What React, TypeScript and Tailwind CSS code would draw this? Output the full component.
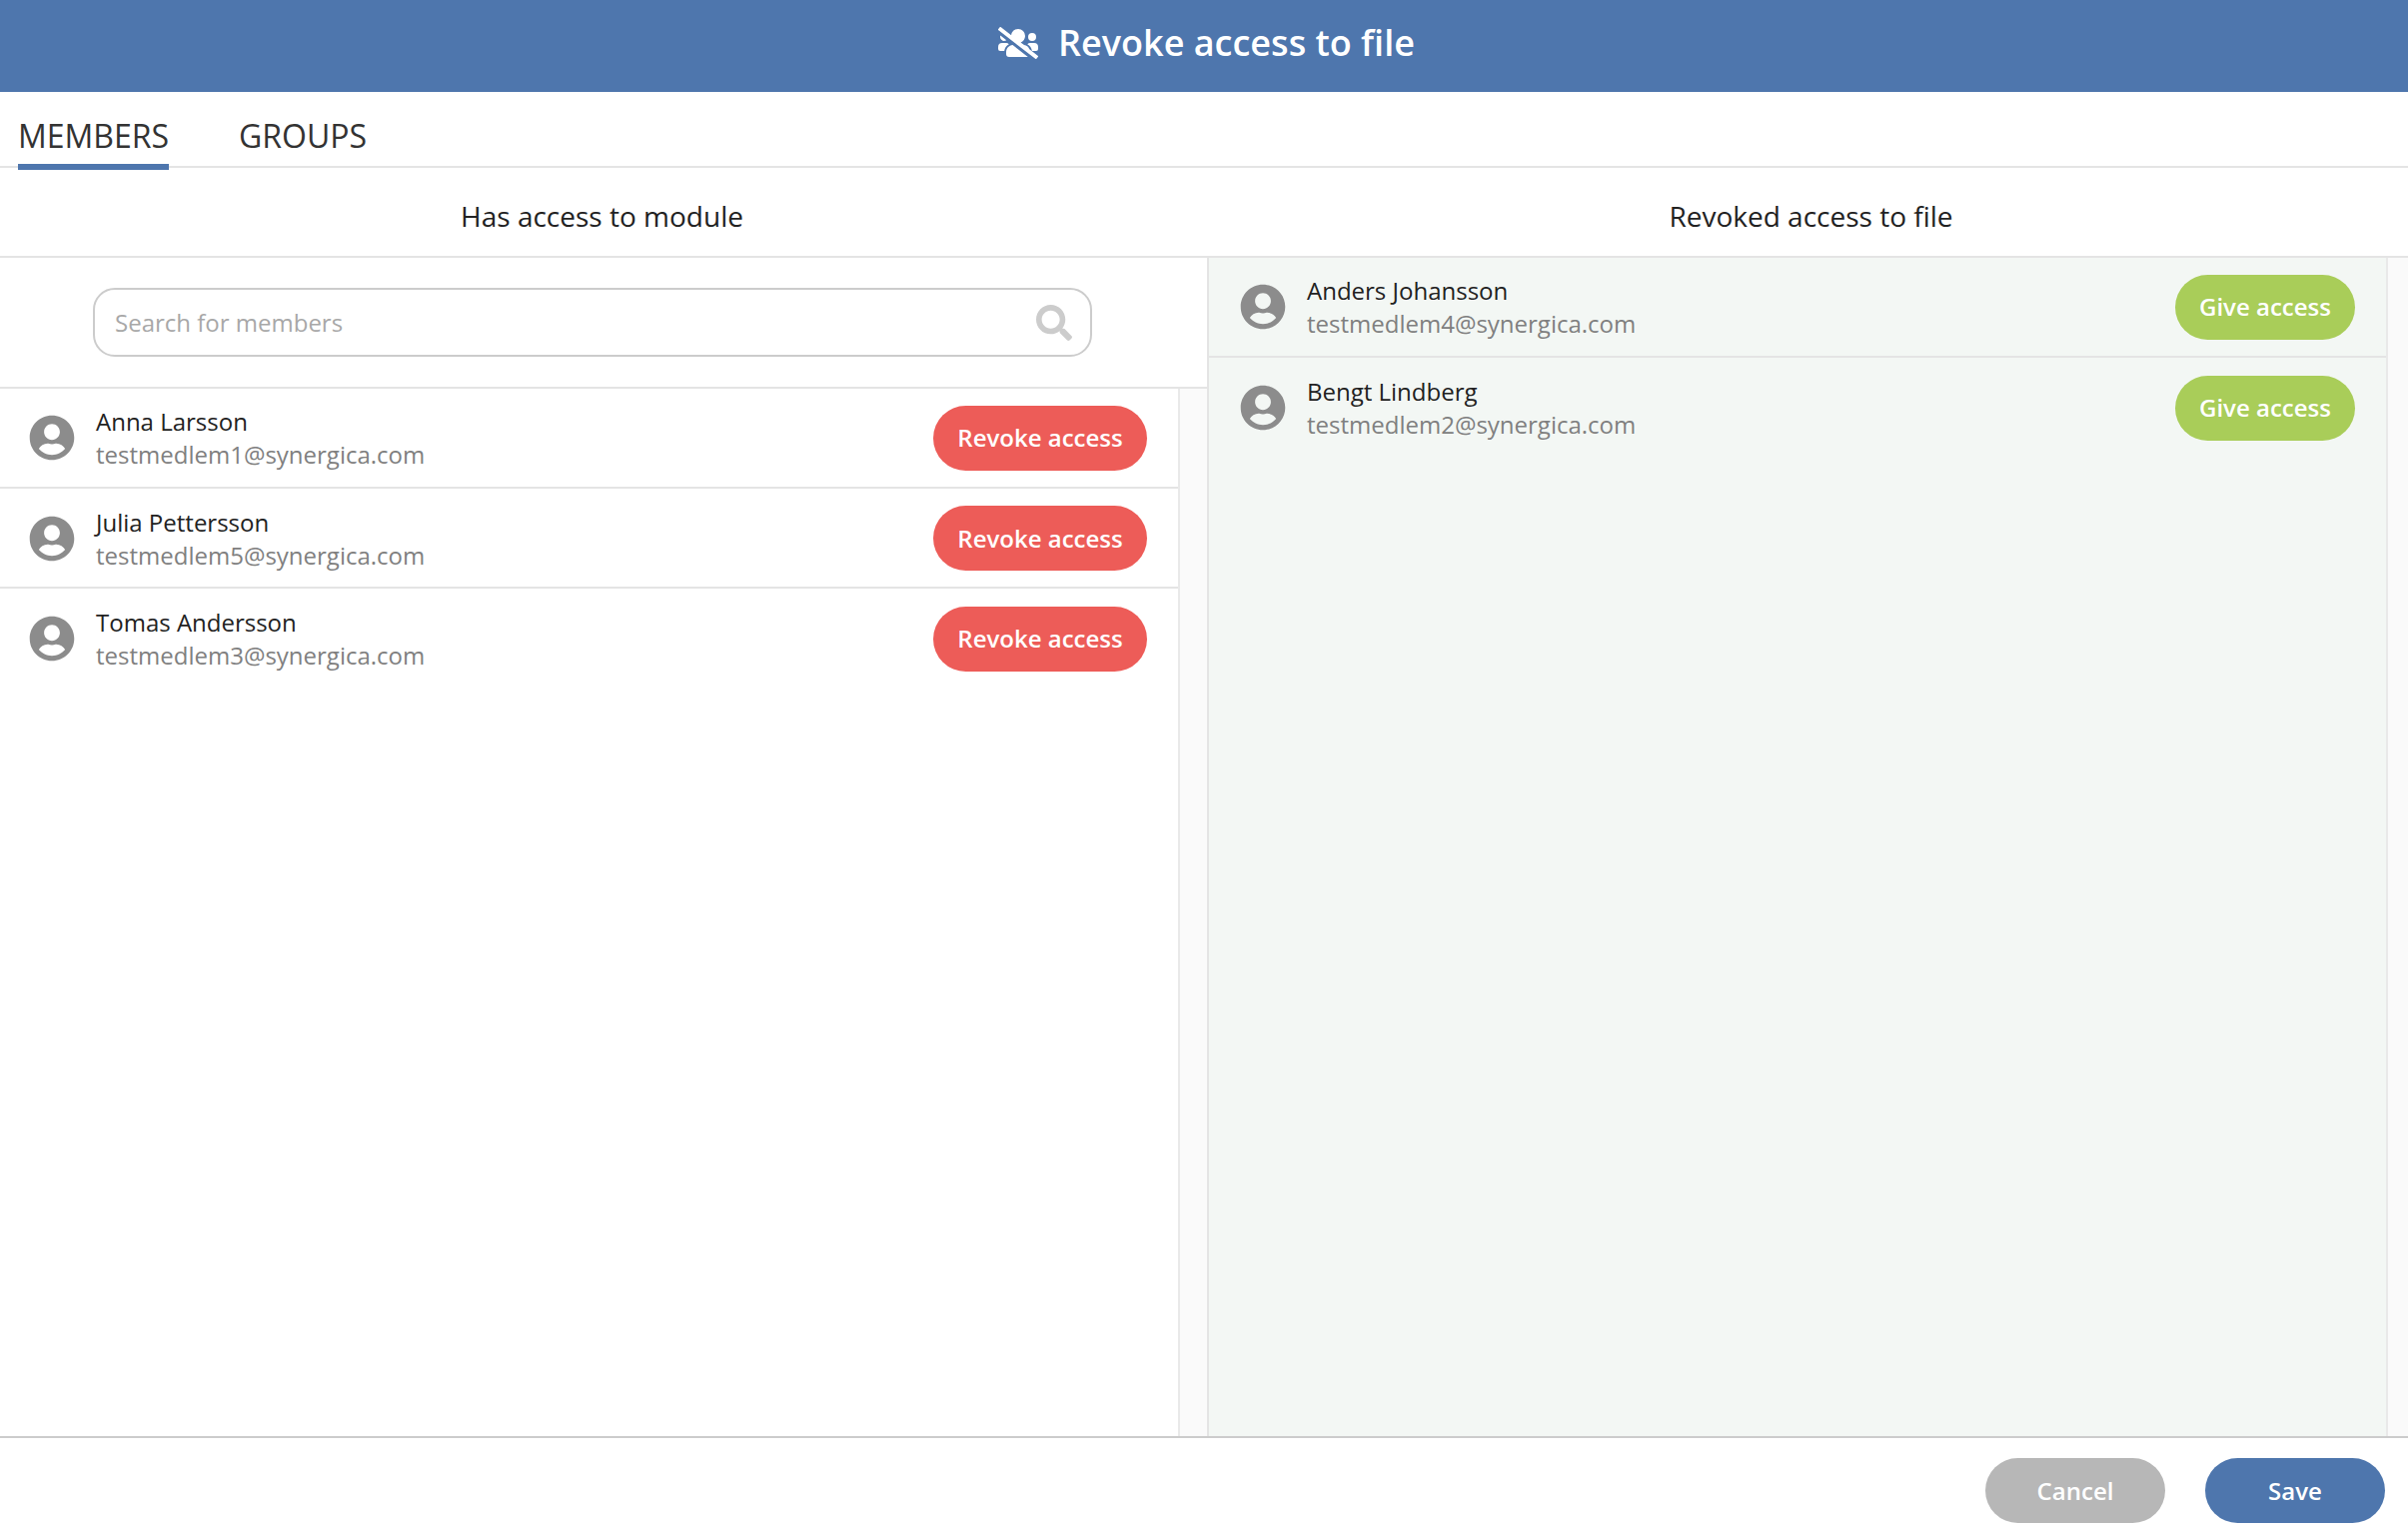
import { FaSearch, FaUserCircle, FaUsersSlash } from "react-icons/fa";

const font = "font-['Open_Sans',sans-serif]";

function Row({ name, email, label, tone, extra }: { name: string; email: string; label: string; tone: string; extra: string }) {
  return (
    <div className={`box-border flex items-center pr-[31px] ${extra}`}>
      <FaUserCircle className="size-[46px] shrink-0 text-[#8c8c8c]" />
      <div className="ml-[21px] flex min-w-0 flex-1 flex-col">
        <span className="text-[24px] leading-[33px] text-[#222]">{name}</span>
        <span className="text-[24px] leading-[33px] text-[#808080]">{email}</span>
      </div>
      <button className={`h-[65px] rounded-full text-[24px] font-semibold text-white ${tone}`}>{label}</button>
    </div>
  );
}

export default function App() {
  const red = "w-[214px] bg-[#ed5c58]";
  const green = "w-[180px] bg-[#a9cd59]";
  const left = "h-[100.5px] pl-[29px] pt-[1.5px]";
  const line = "border-b-2 border-[#e4e4e4]";
  const none = "border-b-2 border-transparent";
  return (
    <div className={`flex h-[1540px] w-[2410px] flex-col overflow-hidden bg-white ${font}`}>
      <header className="flex h-[92px] shrink-0 items-center justify-center gap-[20px] bg-[#4e76ad] pb-[6px] pl-[5px] text-white">
        <FaUsersSlash className="h-[32px] w-[40px]" />
        <h1 className="text-[36px] font-semibold">Revoke access to file</h1>
      </header>

      <nav className="flex h-[76px] shrink-0 gap-[70px] border-b-2 border-[#e4e4e4] pl-[18px] text-[32px] text-[#333]">
        <div className="h-[78px] border-b-[6px] border-[#4e76ad] pt-[21px] leading-[46px]">MEMBERS</div>
        <div className="pt-[21px] leading-[46px]">GROUPS</div>
      </nav>

      <div className="flex h-[90px] shrink-0 items-center border-b-2 border-[#e4e4e4] pt-[8px] text-[28px] text-[#222]">
        <div className="w-[1205px] text-center">Has access to module</div>
        <div className="flex-1 pl-[10px] text-center">Revoked access to file</div>
      </div>

      <main className="flex min-h-0 flex-1">
        <section className="flex w-[1210px] shrink-0 flex-col border-r-2 border-[#e4e4e4]">
          <div className="h-[131px] shrink-0 border-b-2 border-[#e4e4e4] pt-[30px] pl-[93px]">
            <div className="flex h-[69px] w-[1000px] items-center justify-between rounded-[22px] border-2 border-[#cccccc] pr-[18px] pl-[20px]">
              <span className="text-[24px] text-[#a8a8a8]">Search for members</span>
              <FaSearch className="size-[36px] text-[#cccccc]" />
            </div>
          </div>
          <div className="flex min-h-0 flex-1">
            <div className="-mt-px flex-1">
              <Row name="Anna Larsson" email="testmedlem1@synergica.com" label="Revoke access" tone={red} extra={`${left} ${line}`} />
              <Row name="Julia Pettersson" email="testmedlem5@synergica.com" label="Revoke access" tone={red} extra={`${left} ${line}`} />
              <Row name="Tomas Andersson" email="testmedlem3@synergica.com" label="Revoke access" tone={red} extra={`${left} ${none}`} />
            </div>
            <div className="w-[29px] shrink-0 border-l-2 border-[#e9e9e9] bg-[#fafafa]" />
          </div>
        </section>

        <section className="flex min-w-0 flex-1">
          <div className="flex-1 bg-[#f3f7f4]">
            <Row name="Anders Johansson" email="testmedlem4@synergica.com" label="Give access" tone={green} extra={`h-[100px] pl-[31px] ${line}`} />
            <Row name="Bengt Lindberg" email="testmedlem2@synergica.com" label="Give access" tone={green} extra={`h-[100px] pl-[31px] pt-[2px] ${none}`} />
          </div>
          <div className="w-[22px] shrink-0 border-l-2 border-[#e9e9e9] bg-[#fafafa]" />
        </section>
      </main>

      <footer className="flex h-[103px] shrink-0 items-start justify-end gap-[40px] border-t-2 border-[#cccccc] pt-[20px] pr-[23px]">
        <button className="h-[65px] w-[180px] rounded-full bg-[#b7b7b7] text-[24px] font-semibold text-white">Cancel</button>
        <button className="h-[65px] w-[180px] rounded-full bg-[#4e76ad] text-[24px] font-semibold text-white">Save</button>
      </footer>
    </div>
  );
}
